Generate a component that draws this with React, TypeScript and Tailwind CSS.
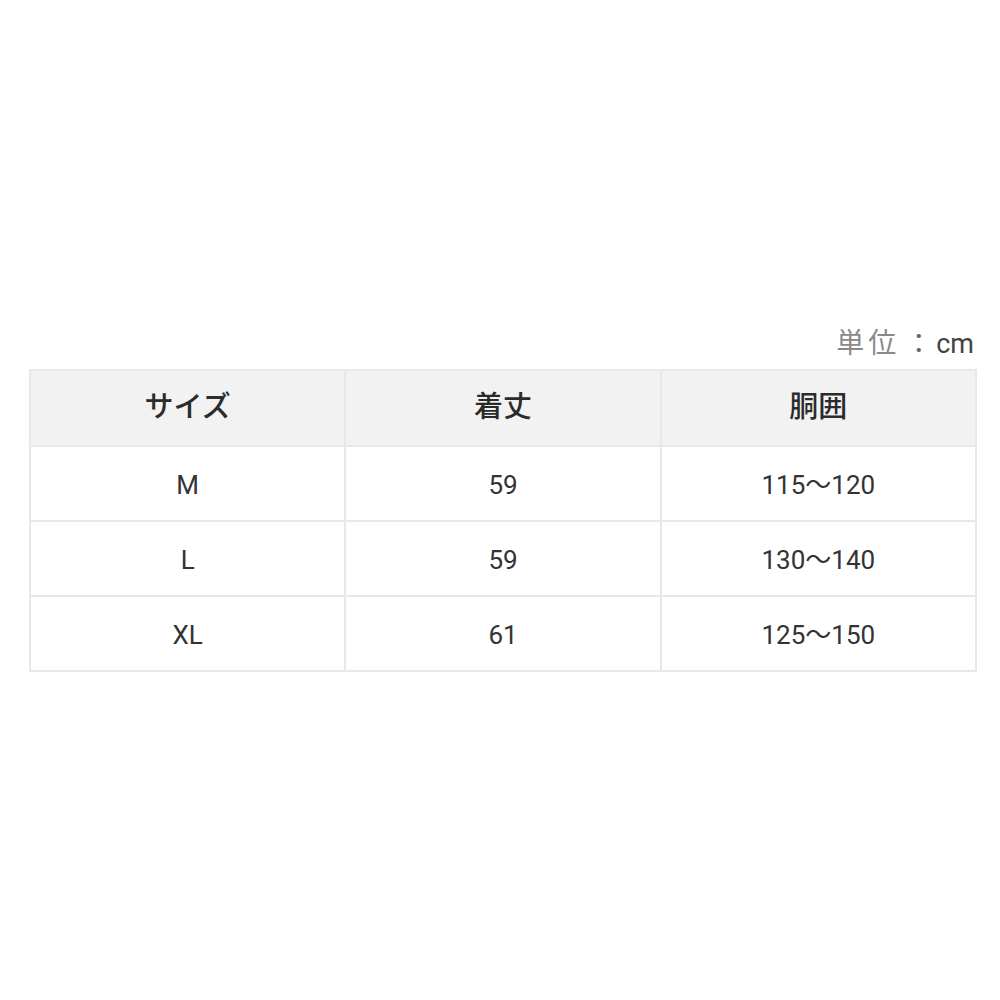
const rows = [
  { size: 'M', length: '59', waist: '115～120' },
  { size: 'L', length: '59', waist: '130～140' },
  { size: 'XL', length: '61', waist: '125～150' },
];

export default function App() {
  return (
    <div
      className="w-[1000px] h-[1000px] bg-white pt-[326px] pl-[29px] text-[#333]"
      style={{ fontFamily: 'Roboto, "Noto Sans CJK JP", sans-serif' }}
    >
      <div className="w-[948px]">
        {/* 単位 */}
        <div className="flex justify-end items-center h-[36px] pr-[3px] text-[27px] leading-none">
          <span className="text-[#8a8a8a] text-[28px] tracking-[4px] mr-[5px]">単位</span>
          <span className="text-[#666]">：</span>
          <span className="text-[#444] ml-[4px]">cm</span>
        </div>

        <table className="mt-[7px] w-[948px] table-fixed border-collapse">
          <thead>
            <tr className="bg-[#f2f2f2] h-[76px]">
              <th className="border-2 border-[#e8e8e8] text-[29px] font-medium text-[#2b2b2b]">サイズ</th>
              <th className="border-2 border-[#e8e8e8] text-[29px] font-medium text-[#2b2b2b]">着丈</th>
              <th className="border-2 border-[#e8e8e8] text-[29px] font-medium text-[#2b2b2b]">胴囲</th>
            </tr>
          </thead>
          <tbody>
            {rows.map((r) => (
              <tr key={r.size} className="h-[75px]">
                <td className="border-2 border-[#e8e8e8] text-center text-[26px] pt-[3px]">{r.size}</td>
                <td className="border-2 border-[#e8e8e8] text-center text-[26px] pt-[3px]">{r.length}</td>
                <td className="border-2 border-[#e8e8e8] text-center text-[26px] pt-[3px]">{r.waist}</td>
              </tr>
            ))}
          </tbody>
        </table>
      </div>
    </div>
  );
}
